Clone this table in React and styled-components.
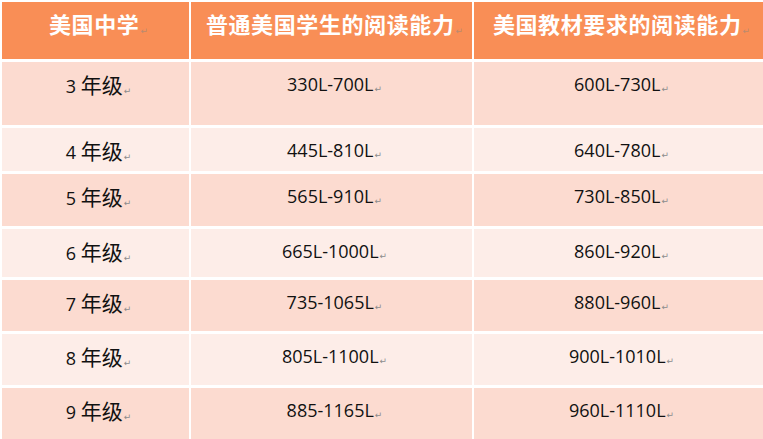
import React from "react";
import styled, { createGlobalStyle } from "styled-components";

const Global = createGlobalStyle`
  html, body {
    margin: 0;
    padding: 0;
    background: #ffffff;
  }
`;

const ROWS = [
  { grade: "3", plain: "330L-700L", book: "600L-730L", h: 63 },
  { grade: "4", plain: "445L-810L", book: "640L-780L", h: 43 },
  { grade: "5", plain: "565L-910L", book: "730L-850L", h: 52 },
  { grade: "6", plain: "665L-1000L", book: "860L-920L", h: 48 },
  { grade: "7", plain: "735-1065L", book: "880L-960L", h: 51 },
  { grade: "8", plain: "805L-1100L", book: "900L-1010L", h: 51 },
  { grade: "9", plain: "885-1165L", book: "960L-1110L", h: 51 },
];

const HEADS = ["美国中学", "普通美国学生的阅读能力", "美国教材要求的阅读能力"];

const Table = styled.div`
  display: grid;
  grid-template-columns: 187px 281px 1fr;
  grid-template-rows: 57px ${(p) => p.$rows};
  column-gap: 2px;
  row-gap: 3px;
  padding: 2px 0 0 2px;
  width: 763px;
  height: 439px;
  box-sizing: border-box;
  overflow: hidden;
`;

const HeadCell = styled.div`
  background: #f98e56;
  color: #ffffff;
  font-family: "Noto Sans CJK SC", sans-serif;
  font-weight: 700;
  font-size: 22px;
  letter-spacing: 0.6px;
  line-height: 26px;
  padding-top: 8px;
  padding-left: 6px;
  text-align: center;
  white-space: nowrap;
`;

const Cell = styled.div`
  background: ${(p) => (p.$light ? "#fdede8" : "#fcdbd0")};
  color: #111111;
  font-family: "Open Sans", "Noto Sans CJK SC", sans-serif;
  font-size: 18px;
  line-height: 24px;
  padding-top: 10px;
  padding-left: 6px;
  text-align: center;
  white-space: nowrap;
`;

const Han = styled.span`
  font-family: "Noto Sans CJK SC", sans-serif;
  font-size: 21px;
`;

const Mark = styled.span`
  font-family: "DejaVu Sans", sans-serif;
  font-size: 9px;
  font-weight: 400;
  color: ${(p) => (p.$onHead ? "#b98a6f" : "#8c8c8c")};
  margin-left: 1px;
  letter-spacing: 0;
  vertical-align: -1px;
`;

export default function App() {
  return (
    <>
      <Global />
      <Table $rows={ROWS.map((r) => `${r.h}px`).join(" ")}>
        {HEADS.map((t) => (
          <HeadCell key={t}>
            {t}
            <Mark $onHead>↵</Mark>
          </HeadCell>
        ))}
        {ROWS.map((r, i) => (
          <React.Fragment key={r.grade}>
            <Cell $light={i % 2 === 1}>
              {r.grade} <Han>年级</Han>
              <Mark>↵</Mark>
            </Cell>
            <Cell $light={i % 2 === 1}>
              {r.plain}
              <Mark>↵</Mark>
            </Cell>
            <Cell $light={i % 2 === 1}>
              {r.book}
              <Mark>↵</Mark>
            </Cell>
          </React.Fragment>
        ))}
      </Table>
    </>
  );
}
